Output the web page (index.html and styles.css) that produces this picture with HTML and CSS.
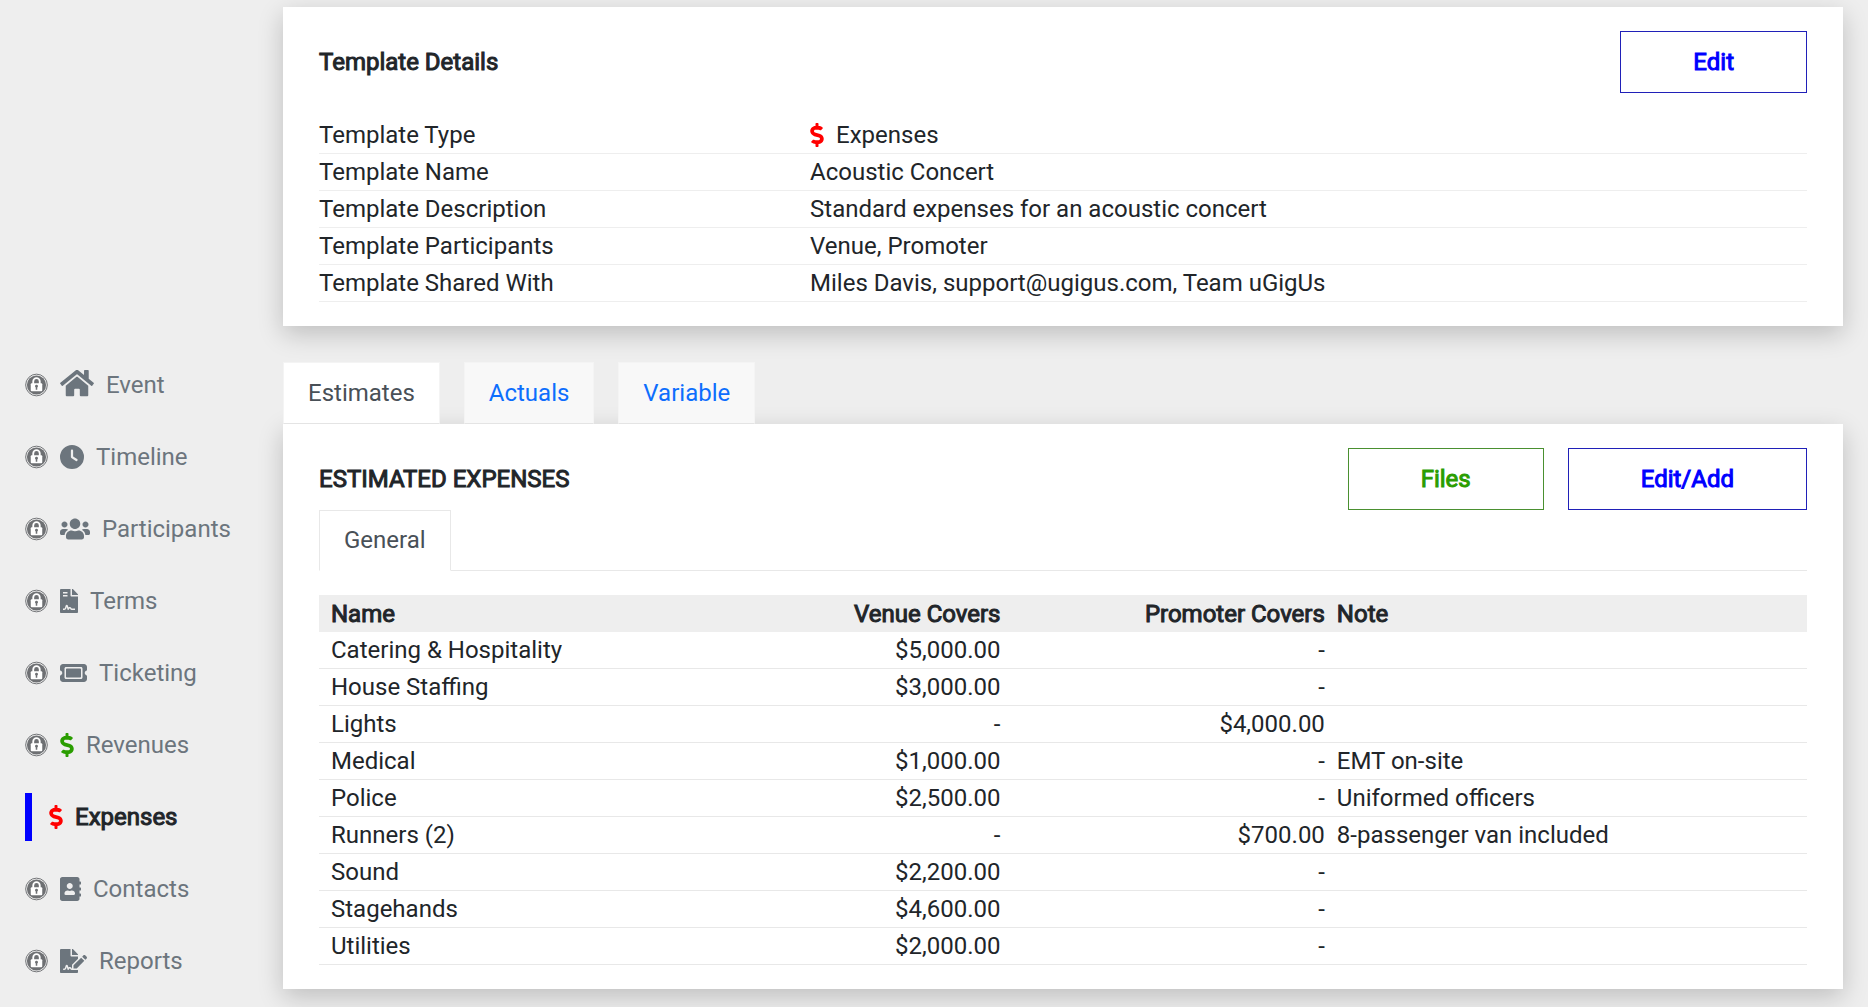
FILE: index.html
```html
<!DOCTYPE html>
<html lang="en">
<head>
<meta charset="utf-8">
<meta name="viewport" content="width=device-width, initial-scale=1">
<title>Expense Template</title>
<link rel="stylesheet" href="styles.css">
</head>
<body>
<svg class="sprite" aria-hidden="true">
  <symbol id="lock" viewBox="0 0 24 24">
    <circle cx="12" cy="12" r="11.300" fill="none" stroke="currentColor" stroke-width="1"/>
    <circle cx="12" cy="12" r="10" fill="currentColor"/>
    <path d="M8.600 11V8.300a3.400 3.400 0 0 1 6.800 0V11" fill="none" stroke="#fff" stroke-width="1.900"/>
    <rect x="6" y="10.200" width="12" height="8.300" rx="1" fill="#fff"/>
    <path d="M12 11.800a1.500 1.500 0 0 1 .8 2.800V17h-1.600v-2.400a1.500 1.500 0 0 1 .8-2.800z" fill="currentColor"/>
  </symbol>
  <symbol id="home" viewBox="0 32 576 512"><path d="M280.37 148.26L96 300.11V464a16 16 0 0 0 16 16l112.060-.29a16 16 0 0 0 15.920-16V368a16 16 0 0 1 16-16h64a16 16 0 0 1 16 16v95.640a16 16 0 0 0 16 16.050L464 480a16 16 0 0 0 16-16V300L295.670 148.260a12.190 12.190 0 0 0-15.300 0zM571.600 251.470L488 182.560V44.050a12 12 0 0 0-12-12h-56a12 12 0 0 0-12 12v72.610L318.470 43a48 48 0 0 0-61 0L4.340 251.470a12 12 0 0 0-1.600 16.900l25.500 31A12 12 0 0 0 45.150 301l235.220-193.740a12.190 12.190 0 0 1 15.300 0L530.900 301a12 12 0 0 0 16.900-1.600l25.500-31a12 12 0 0 0-1.700-16.930z"/></symbol>
  <symbol id="clock" viewBox="0 0 512 512"><path d="M256 0a256 256 0 1 1 0 512A256 256 0 1 1 256 0zM232 120V256c0 8 4 15.500 10.700 20l96 64c11 7.400 25.900 4.400 33.300-6.700s4.400-25.900-6.700-33.300L280 243.200V120c0-13.300-10.700-24-24-24s-24 10.700-24 24z"/></symbol>
  <symbol id="users" viewBox="0 0 640 512"><path d="M96 224c35.300 0 64-28.700 64-64s-28.700-64-64-64-64 28.700-64 64 28.700 64 64 64zm448 0c35.300 0 64-28.700 64-64s-28.700-64-64-64-64 28.700-64 64 28.700 64 64 64zm32 32h-64c-17.600 0-33.500 7.100-45.100 18.600 40.300 22.100 68.900 62 75.100 109.400h66c17.700 0 32-14.300 32-32v-32c0-35.300-28.700-64-64-64zm-256 0c61.900 0 112-50.100 112-112S381.900 32 320 32 208 82.100 208 144s50.100 112 112 112zm76.800 32h-8.300c-20.800 10-43.900 16-68.500 16s-47.600-6-68.500-16h-8.300C179.600 288 128 339.600 128 403.200V432c0 26.500 21.500 48 48 48h288c26.500 0 48-21.500 48-48v-28.800c0-63.600-51.600-115.200-115.200-115.200zm-223.700-13.400C161.500 263.100 145.600 256 128 256H64c-35.300 0-64 28.700-64 64v32c0 17.700 14.300 32 32 32h65.900c6.300-47.400 34.900-87.300 75.200-109.400z"/></symbol>
  <symbol id="contract" viewBox="0 0 384 512"><path fill-rule="evenodd" d="M224 136V0H24C10.700 0 0 10.700 0 24v464c0 13.300 10.700 24 24 24h336c13.300 0 24-10.700 24-24V160H248c-13.200 0-24-10.800-24-24zM64 64h96v32H64zM64 128h96v32H64zM64 416h28.400c4.800 0 9.100-3.100 10.600-7.700l18.200-54.600c7-21 38.500-21 45.500 0l13.900 41.600c19.700-16.200 54-9.700 66 14.200 2.200 4.500 6.300 6.500 10.200 6.500H320v32h-63.200c-16.400 0-31.300-9.100-38.600-23.900-4.500-9-15.700-8.600-20.200-.3l-7.700 15.300c-6.400 12.800-25 11.400-29.500-2L144 386.600l-10.600 31.900c-5.900 17.600-22.400 29.500-41 29.500H64zM384 121.900v6.100H256V0h6.100c6.400 0 12.500 2.500 17 7l97.900 98c4.500 4.500 7 10.600 7 16.900z"/></symbol>
  <symbol id="ticket" viewBox="0 0 576 512"><path d="M64 64C28.700 64 0 92.700 0 128v64c0 8.800 7.400 15.700 15.700 18.600C34.500 217.100 48 235 48 256s-13.500 38.900-32.300 45.400C7.400 304.300 0 311.200 0 320v64c0 35.300 28.700 64 64 64H512c35.300 0 64-28.700 64-64V320c0-8.800-7.400-15.700-15.700-18.600C541.500 294.900 528 277 528 256s13.500-38.900 32.300-45.400c8.300-2.900 15.700-9.800 15.700-18.600V128c0-35.300-28.700-64-64-64H64zm64 112l0 160c0 8.800 7.200 16 16 16H432c8.800 0 16-7.200 16-16V176c0-8.800-7.200-16-16-16H144c-8.800 0-16 7.200-16 16zM96 160c0-17.700 14.300-32 32-32H448c17.700 0 32 14.300 32 32V352c0 17.700-14.300 32-32 32H128c-17.700 0-32-14.300-32-32V160z"/></symbol>
  <symbol id="dollar" viewBox="0 0 288 512"><path d="M209.200 233.400l-108-31.600C88.700 198.200 80 186.500 80 173.500c0-16.300 13.200-29.500 29.500-29.500h66.300c12.200 0 24.200 3.700 34.200 10.500 6.100 4.100 14.300 3.100 19.500-2l34.800-34c7.100-6.900 6.100-18.400-1.800-24.500C238 74.800 207.400 64.100 176 64V16c0-8.800-7.200-16-16-16h-32c-8.800 0-16 7.200-16 16v48h-2.500C45.800 64-5.400 118.700.5 183.600c4.200 46.100 39.400 83.600 83.800 96.600l102.500 30c12.500 3.700 21.200 15.300 21.200 28.300 0 16.300-13.200 29.500-29.500 29.500h-66.300C100 368 88 364.300 78 357.500c-6.100-4.100-14.300-3.100-19.500 2l-34.800 34c-7.100 6.900-6.100 18.400 1.800 24.500 24.500 19.200 55.100 29.900 86.500 30v48c0 8.800 7.200 16 16 16h32c8.800 0 16-7.200 16-16v-48.200c46.600-.9 90.300-28.600 105.700-72.700 21.500-61.600-14.600-124.800-72.500-141.700z"/></symbol>
  <symbol id="book" viewBox="0 0 448 512"><path d="M436 160c6.600 0 12-5.400 12-12v-40c0-6.600-5.400-12-12-12h-20V48c0-26.500-21.500-48-48-48H48C21.500 0 0 21.500 0 48v416c0 26.500 21.500 48 48 48h320c26.500 0 48-21.500 48-48v-48h20c6.600 0 12-5.400 12-12v-40c0-6.600-5.400-12-12-12h-20v-64h20c6.600 0 12-5.400 12-12v-40c0-6.600-5.400-12-12-12h-20v-64h20zm-228-32c35.300 0 64 28.700 64 64s-28.700 64-64 64-64-28.700-64-64 28.700-64 64-64zm112 236.800c0 10.600-10 19.200-22.400 19.200H118.400C106 384 96 375.400 96 364.800v-19.200c0-31.800 30.100-57.600 67.200-57.600h5c12.300 5.100 25.700 8 39.800 8s27.600-2.900 39.800-8h5c37.100 0 67.200 25.800 67.200 57.600v19.200z"/></symbol>
  <symbol id="signature" viewBox="0 0 576 512"><path d="M218.170 424.140c-2.950-5.920-8.090-6.520-10.170-6.520s-7.220.59-10.020 6.190l-7.670 15.340c-6.370 12.780-25.030 11.370-29.480-2.090L144 386.590l-10.610 31.880c-5.890 17.660-22.380 29.530-41 29.530H80c-8.840 0-16-7.160-16-16s7.160-16 16-16h12.390c4.830 0 9.110-3.080 10.640-7.660l18.190-54.640c3.300-9.810 12.440-16.410 22.780-16.410s19.480 6.590 22.770 16.410l13.880 41.640c19.750-16.190 54.060-9.700 66 14.160 1.890 3.780 5.490 5.950 9.360 6.260v-82.120l128-127.090V160H248c-13.200 0-24-10.800-24-24V0H24C10.700 0 0 10.700 0 24v464c0 13.300 10.700 24 24 24h336c13.300 0 24-10.700 24-24v-40l-128-.11c-16.120-.31-30.580-9.280-37.830-23.750zM384 121.900c0-6.300-2.500-12.400-7-16.900L279.100 7c-4.500-4.500-10.600-7-17-7H256v128h128v-6.100zm-96 225.060V416h68.990l161.680-162.780-67.880-67.880L288 346.960zm280.540-179.630l-31.870-31.870c-9.940-9.940-26.070-9.940-36.010 0l-27.250 27.250 67.880 67.880 27.250-27.250c9.950-9.940 9.950-26.070 0-36.010z"/></symbol>
</svg>

<div class="layout">
  <nav class="sidebar" aria-label="Sections">
    <a class="side-link" href="#"><svg class="icon lock"><use href="#lock"/></svg><svg class="icon home"><use href="#home"/></svg><span>Event</span></a>
    <a class="side-link" href="#"><svg class="icon lock"><use href="#lock"/></svg><svg class="icon clock"><use href="#clock"/></svg><span>Timeline</span></a>
    <a class="side-link" href="#"><svg class="icon lock"><use href="#lock"/></svg><svg class="icon users"><use href="#users"/></svg><span>Participants</span></a>
    <a class="side-link" href="#"><svg class="icon lock"><use href="#lock"/></svg><svg class="icon contract"><use href="#contract"/></svg><span>Terms</span></a>
    <a class="side-link" href="#"><svg class="icon lock"><use href="#lock"/></svg><svg class="icon ticket"><use href="#ticket"/></svg><span>Ticketing</span></a>
    <a class="side-link" href="#"><svg class="icon lock"><use href="#lock"/></svg><svg class="icon dollar green"><use href="#dollar"/></svg><span>Revenues</span></a>
    <a class="side-link active" href="#" aria-current="page"><svg class="icon dollar red"><use href="#dollar"/></svg><span>Expenses</span></a>
    <a class="side-link" href="#"><svg class="icon lock"><use href="#lock"/></svg><svg class="icon book"><use href="#book"/></svg><span>Contacts</span></a>
    <a class="side-link" href="#"><svg class="icon lock"><use href="#lock"/></svg><svg class="icon signature"><use href="#signature"/></svg><span>Reports</span></a>
  </nav>

  <main class="content">
    <section class="card">
      <header class="card-head">
        <h2 class="title">Template Details</h2>
        <button class="btn blue" type="button">Edit</button>
      </header>
      <dl class="details">
        <div class="detail"><dt>Template Type</dt><dd><svg class="icon dollar red"><use href="#dollar"/></svg>Expenses</dd></div>
        <div class="detail"><dt>Template Name</dt><dd>Acoustic Concert</dd></div>
        <div class="detail"><dt>Template Description</dt><dd>Standard expenses for an acoustic concert</dd></div>
        <div class="detail"><dt>Template Participants</dt><dd>Venue, Promoter</dd></div>
        <div class="detail"><dt>Template Shared With</dt><dd>Miles Davis, support@ugigus.com, Team uGigUs</dd></div>
      </dl>
    </section>

    <nav class="tabs" aria-label="Expense views">
      <a class="tab current" href="#" aria-current="true">Estimates</a>
      <a class="tab" href="#">Actuals</a>
      <a class="tab" href="#">Variable</a>
    </nav>

    <section class="card">
      <header class="card-head">
        <h2 class="title">ESTIMATED EXPENSES</h2>
        <button class="btn green" type="button">Files</button>
        <button class="btn blue" type="button">Edit/Add</button>
      </header>
      <nav class="subtabs" aria-label="Expense groups">
        <a class="subtab" href="#" aria-current="true">General</a>
      </nav>
      <table class="expenses">
        <colgroup><col class="col-name"><col class="col-amount"><col class="col-amount"><col></colgroup>
        <thead>
          <tr><th scope="col">Name</th><th class="num" scope="col">Venue Covers</th><th class="num" scope="col">Promoter Covers</th><th scope="col">Note</th></tr>
        </thead>
        <tbody>
          <tr><td>Catering &amp; Hospitality</td><td class="num">$5,000.00</td><td class="num">-</td><td></td></tr>
          <tr><td>House Staffing</td><td class="num">$3,000.00</td><td class="num">-</td><td></td></tr>
          <tr><td>Lights</td><td class="num">-</td><td class="num">$4,000.00</td><td></td></tr>
          <tr><td>Medical</td><td class="num">$1,000.00</td><td class="num">-</td><td>EMT on-site</td></tr>
          <tr><td>Police</td><td class="num">$2,500.00</td><td class="num">-</td><td>Uniformed officers</td></tr>
          <tr><td>Runners (2)</td><td class="num">-</td><td class="num">$700.00</td><td>8-passenger van included</td></tr>
          <tr><td>Sound</td><td class="num">$2,200.00</td><td class="num">-</td><td></td></tr>
          <tr><td>Stagehands</td><td class="num">$4,600.00</td><td class="num">-</td><td></td></tr>
          <tr><td>Utilities</td><td class="num">$2,000.00</td><td class="num">-</td><td></td></tr>
        </tbody>
      </table>
    </section>
  </main>
</div>
</body>
</html>
```
FILE: styles.css
```css
* {
  box-sizing: border-box;
}

body {
  margin: 0;
  background: #eee;
  color: #212529;
  font-family: Roboto, "Liberation Sans", sans-serif;
  font-size: 24px;
  line-height: 36px;
}

a {
  color: inherit;
  text-decoration: none;
}

.sprite {
  display: none;
}

.layout {
  display: grid;
  grid-template-columns: 258px minmax(0, 1fr);
  min-height: 100vh;
  padding: 7px 25px 16px;
}

/* Sidebar */
.sidebar {
  display: flex;
  flex-direction: column;
  gap: 24px;
  padding-top: 354px;
}

.side-link {
  display: flex;
  align-items: center;
  gap: 12px;
  height: 48px;
  color: #6c757d;
}

.side-link.active {
  padding-left: 17px;
  border-left: 7px solid #00f;
  color: #212529;
  -webkit-text-stroke: 1px currentColor;
}

.icon {
  flex: none;
  height: 24px;
  fill: currentColor;
}

.lock { width: 23px; color: #6e7073; }
.home { width: 34px; height: 30px; }
.clock { width: 24px; }
.users { width: 30px; }
.contract { width: 18px; }
.ticket { width: 27px; }
.dollar { width: 14px; }
.book { width: 21px; }
.signature { width: 27px; }

.icon.green { color: #2a9d00; }
.icon.red { color: #f00; }

/* Cards */
.card {
  padding: 24px 36px;
  background: #fff;
  box-shadow: 0 8px 24px rgba(0, 0, 0, .2);
}

.card-head {
  display: flex;
  align-items: center;
  gap: 24px;
}

.title {
  flex: 1;
  margin: 0;
  font-size: 24px;
  font-weight: 400;
  -webkit-text-stroke: 1px currentColor;
}

.btn {
  padding: 12px 72px;
  border: 1px solid currentColor;
  background: #fff;
  font: inherit;
  -webkit-text-stroke: 1px currentColor;
}

.btn.blue { color: #00f; border-color: #2020b8; }
.btn.green { color: #2a9d00; border-color: #4a9030; }

.details {
  margin: 24px 0 0;
}

.detail {
  display: grid;
  grid-template-columns: 33% 1fr;
  border-bottom: 1px solid #eee;
}

.detail dd {
  display: flex;
  align-items: center;
  gap: 12px;
  margin: 0;
}

/* Tabs */
.tabs {
  display: flex;
  gap: 24px;
  margin-top: 36px;
}

.tab {
  padding: 12px 24px;
  border: 1px solid #f4f4f4;
  border-bottom-color: #e4e4e4;
  background: #f8f8f8;
  color: #0d6efd;
}

.tab.current {
  background: #fff;
  color: #495057;
}

.subtabs {
  display: flex;
  border-bottom: 1px solid #e8e8e8;
}

.subtab {
  margin-bottom: -1px;
  padding: 11px 24px 12px;
  border: 1px solid #e8e8e8;
  border-bottom-color: #fff;
  background: #fff;
  color: #495057;
}

/* Expense table */
.expenses {
  width: 100%;
  margin-top: 24px;
  border-collapse: separate;
  border-spacing: 0;
  table-layout: fixed;
}

.col-name { width: 24%; }
.col-amount { width: 21.8%; }

.expenses th,
.expenses td {
  height: 37px;
  padding: 0 0 0 12px;
  text-align: left;
}

.expenses th {
  background: #eee;
  font-weight: 400;
  -webkit-text-stroke: 1px currentColor;
}

.expenses td {
  border-bottom: 1px solid #e8e8e8;
}

.expenses .num {
  text-align: right;
}
```
